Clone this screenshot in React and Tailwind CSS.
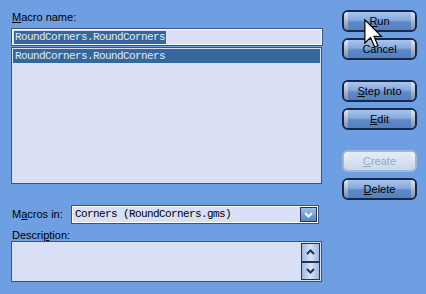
import React from 'react';

const labelFont = { fontFamily: '"Liberation Sans", Arial, sans-serif' };

function Acc({ children }) {
  return <span className="underline underline-offset-[1px]">{children}</span>;
}

function SkinButton({ children, disabled }) {
  return (
    <div
      className={`relative h-[22px] w-[75px] rounded-[6px] border-2 flex items-center justify-center text-[11px] leading-none ${
        disabled
          ? 'border-[#9fb6d8] bg-[linear-gradient(#e4ecf8,#c9d8ee)] text-[#9aa9c0]'
          : 'border-[#17284d] bg-[linear-gradient(#a9c5ec_0%,#86a9dd_45%,#5f89c8_55%,#5480c2_100%)] text-black'
      }`}
      style={labelFont}
    >
      <div className={`absolute left-0 top-0 bottom-0 w-[4px] rounded-l-[4px] ${disabled ? 'bg-[linear-gradient(#f2f5fa,#c8d2e0)]' : 'bg-[linear-gradient(#e2e8f0,#7d8ca6)]'}`} />
      <div className={`absolute right-0 top-0 bottom-0 w-[4px] rounded-r-[4px] ${disabled ? 'bg-[linear-gradient(#f2f5fa,#c8d2e0)]' : 'bg-[linear-gradient(#e2e8f0,#7d8ca6)]'}`} />
      <span className="relative">{children}</span>
    </div>
  );
}

function Chevron({ up, color }) {
  return (
    <svg width="9" height="6" viewBox="0 0 9 6">
      <path
        d={up ? 'M1 5 L4.5 1.5 L8 5' : 'M1 1 L4.5 4.5 L8 1'}
        fill="none"
        stroke={color}
        strokeWidth="2"
      />
    </svg>
  );
}

export default function App() {
  const mono = { fontFamily: '"Liberation Mono", "Courier New", monospace', letterSpacing: '-0.6px' };

  return (
    <div className="relative w-[426px] h-[294px] bg-[#6d9fe2] flex text-black overflow-hidden">
      {/* Left side */}
      <div className="w-[331px] pl-[11px] pt-[11px] flex flex-col">
        <div className="text-[11px] leading-[13px] pl-[1px]" style={labelFont}>
          <Acc>M</Acc>acro name:
        </div>
        <div className="mt-[4px] w-[312px] h-[18px] border border-[#3d5378] bg-[#d9e0f6] shadow-[inset_0_0_0_1px_#ffffff] flex items-center pl-[2px]">
          <span className="bg-[#34689c] text-[#e3e9f7] text-[11px] leading-[13px] px-[1px]" style={mono}>
            RoundCorners.RoundCorners
          </span>
        </div>
        <div className="mt-[1px] w-[311px] h-[137px] border border-[#3d5378] bg-[#d9e0f6] p-[1px]">
          <div className="h-[14px] bg-[#34689c] text-[#e3e9f7] text-[11px] leading-[14px] pl-[2px]" style={mono}>
            RoundCorners.RoundCorners
          </div>
        </div>

        <div className="mt-[21px] flex items-center h-[19px]">
          <div className="w-[60px] text-[11px] pl-[1px]" style={labelFont}>
            M<Acc>a</Acc>cros in:
          </div>
          <div className="w-[248px] h-[19px] border border-[#3d5378] bg-[#d9e0f6] shadow-[inset_0_0_0_1px_#ffffff] flex items-center justify-between pl-[3px] pr-[1px]">
            <span className="text-[11px] leading-[13px]" style={mono}>Corners (RoundCorners.gms)</span>
            <div className="w-[17px] h-[15px] border border-[#1f3560] bg-[linear-gradient(#9cbde8,#5784c4)] flex items-center justify-center">
              <Chevron color="#e8fbff" />
            </div>
          </div>
        </div>

        <div className="mt-[5px] text-[11px] leading-[13px] pl-[1px]" style={labelFont}>
          Descri<Acc>p</Acc>tion:
        </div>
        <div className="mt-[-1px] w-[311px] h-[41px] border border-[#3d5378] bg-[#d9e0f6] flex justify-end p-[1px]">
          <div className="flex flex-col w-[19px]">
            <div className="h-[19px] border border-[#1f3560] bg-[linear-gradient(90deg,#9fb9dc,#d6e3f4,#9fb9dc)] flex items-center justify-center">
              <Chevron up color="#1d3358" />
            </div>
            <div className="h-[19px] border border-[#1f3560] bg-[linear-gradient(90deg,#9fb9dc,#d6e3f4,#9fb9dc)] flex items-center justify-center">
              <Chevron color="#1d3358" />
            </div>
          </div>
        </div>
      </div>

      {/* Right side buttons */}
      <div className="pl-[11px] pt-[10px] flex flex-col gap-[6px]">
        <SkinButton><Acc>R</Acc>un</SkinButton>
        <SkinButton>Cancel</SkinButton>
        <div className="mt-[8px]" />
        <SkinButton><Acc>S</Acc>tep Into</SkinButton>
        <SkinButton><Acc>E</Acc>dit</SkinButton>
        <div className="mt-[8px]" />
        <SkinButton disabled><Acc>C</Acc>reate</SkinButton>
        <SkinButton><Acc>D</Acc>elete</SkinButton>
      </div>

      {/* Mouse cursor over Run */}
      <svg className="absolute left-[364px] top-[19px]" width="19" height="30" viewBox="0 0 12.5 20">
        <path
          d="M0.5 0.5 L0.5 16 L4.3 12.3 L7 18.7 L9.2 17.8 L6.6 11.6 L11.5 11.6 Z"
          fill="#ffffff"
          stroke="#000000"
          strokeWidth="0.8"
          strokeLinejoin="miter"
        />
      </svg>
    </div>
  );
}
